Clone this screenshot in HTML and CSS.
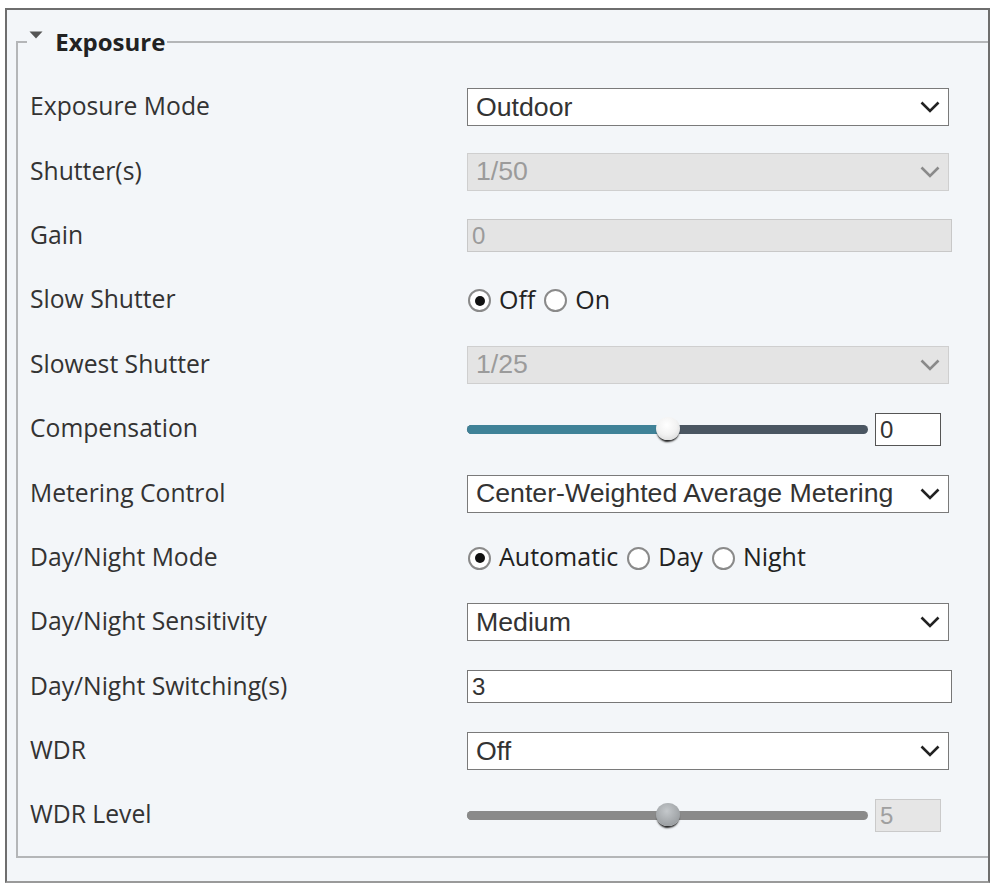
FILE: index.html
```html
<!DOCTYPE html>
<html lang="en">
<head>
    <meta charset="UTF-8">
    <meta name="viewport" content="width=device-width, initial-scale=1.0">
    <title>Exposure</title>
    <link rel="stylesheet" href="styles.css">
</head>
<body>
    <div class="frame">
        <fieldset class="group">
            <legend class="group-title">
                <svg class="caret" width="14" height="8" viewBox="0 0 14 8"><path d="M0.5 0.5 L13.5 0.5 L7 7.5 Z" fill="#555"/></svg>
                Exposure
            </legend>

            <div class="row">
                <div class="label">Exposure Mode</div>
                <div class="select"><span>Outdoor</span><svg class="chev" width="20" height="12" viewBox="0 0 20 12"><path d="M1.5 1.5 L10 10 L18.5 1.5"/></svg></div>
            </div>
            <div class="row">
                <div class="label">Shutter(s)</div>
                <div class="select disabled"><span>1/50</span><svg class="chev" width="20" height="12" viewBox="0 0 20 12"><path d="M1.5 1.5 L10 10 L18.5 1.5"/></svg></div>
            </div>
            <div class="row">
                <div class="label">Gain</div>
                <div class="text-input disabled">0</div>
            </div>
            <div class="row">
                <div class="label">Slow Shutter</div>
                <div class="radios">
                    <span class="radio checked"></span><span class="radio-text">Off</span>
                    <span class="radio"></span><span class="radio-text">On</span>
                </div>
            </div>
            <div class="row">
                <div class="label">Slowest Shutter</div>
                <div class="select disabled"><span>1/25</span><svg class="chev" width="20" height="12" viewBox="0 0 20 12"><path d="M1.5 1.5 L10 10 L18.5 1.5"/></svg></div>
            </div>
            <div class="row">
                <div class="label">Compensation</div>
                <div class="slider-wrap">
                    <div class="slider">
                        <div class="slider-fill" style="width: 50%"></div>
                        <div class="slider-thumb" style="left: 50%"></div>
                    </div>
                    <div class="slider-value">0</div>
                </div>
            </div>
            <div class="row">
                <div class="label">Metering Control</div>
                <div class="select"><span>Center-Weighted Average Metering</span><svg class="chev" width="20" height="12" viewBox="0 0 20 12"><path d="M1.5 1.5 L10 10 L18.5 1.5"/></svg></div>
            </div>
            <div class="row">
                <div class="label">Day/Night Mode</div>
                <div class="radios">
                    <span class="radio checked"></span><span class="radio-text">Automatic</span>
                    <span class="radio"></span><span class="radio-text">Day</span>
                    <span class="radio"></span><span class="radio-text">Night</span>
                </div>
            </div>
            <div class="row">
                <div class="label">Day/Night Sensitivity</div>
                <div class="select"><span>Medium</span><svg class="chev" width="20" height="12" viewBox="0 0 20 12"><path d="M1.5 1.5 L10 10 L18.5 1.5"/></svg></div>
            </div>
            <div class="row">
                <div class="label">Day/Night Switching(s)</div>
                <div class="text-input">3</div>
            </div>
            <div class="row">
                <div class="label">WDR</div>
                <div class="select"><span>Off</span><svg class="chev" width="20" height="12" viewBox="0 0 20 12"><path d="M1.5 1.5 L10 10 L18.5 1.5"/></svg></div>
            </div>
            <div class="row">
                <div class="label">WDR Level</div>
                <div class="slider-wrap disabled">
                    <div class="slider">
                        <div class="slider-fill" style="width: 50%"></div>
                        <div class="slider-thumb" style="left: 50%"></div>
                    </div>
                    <div class="slider-value">5</div>
                </div>
            </div>
        </fieldset>
    </div>
</body>
</html>
```

FILE: styles.css
```css
body {
    margin: 0;
    background: #ffffff;
    font-family: "Open Sans", "Noto Sans", sans-serif;
    color: #333;
}
.frame {
    margin: 8px 0 0 5px;
    height: 871px;
    border: 2px solid #6e6e6e;
    border-bottom-color: #9a9a9a;
    background: #f3f6f9;
}
.group {
    margin: 16px 0 0 9px;
    padding: 17px 0 8px 12px;
    border: 2px solid #b4b6b8;
    border-right: none;
}
.group-title {
    margin-left: -3px;
    padding: 0 2px;
    height: 32px;
    line-height: 32px;
    font-size: 24px;
    font-weight: bold;
    color: #222;
}
.caret {
    vertical-align: 12px;
    margin-right: 6px;
}
.row {
    display: grid;
    grid-template-columns: 437px 1fr;
    align-items: center;
    height: 64.4px;
}
.label {
    padding-bottom: 3px;
    font-size: 24.7px;
    color: #333;
}
.select {
    display: flex;
    align-items: center;
    justify-content: space-between;
    box-sizing: border-box;
    width: 482px;
    height: 38px;
    padding: 0 8px 0 8px;
    background: #fff;
    border: 1px solid #7a7a7a;
    font-family: "Liberation Sans", Arial, sans-serif;
    font-size: 26.7px;
    color: #333;
}
.chev path {
    fill: none;
    stroke: #222;
    stroke-width: 2.6;
}
.select.disabled {
    background: #e4e4e4;
    border-color: #cfcfcf;
    color: #9b9b9b;
}
.select.disabled .chev path {
    stroke: #8a8a8a;
}
.text-input {
    box-sizing: border-box;
    width: 485px;
    height: 33px;
    padding: 0 4px;
    line-height: 31px;
    background: #fff;
    border: 1px solid #777;
    font-family: "Liberation Sans", Arial, sans-serif;
    font-size: 24px;
    color: #333;
}
.text-input.disabled {
    background: #e4e4e4;
    border-color: #c8c8c8;
    color: #9b9b9b;
}
.radios {
    display: flex;
    align-items: center;
    font-size: 25px;
    color: #222;
}
.radio {
    box-sizing: border-box;
    width: 23px;
    height: 23px;
    margin: 1px 8px 0 1px;
    border: 2px solid #8a8a8a;
    border-radius: 50%;
    background: #fff;
    position: relative;
}
.radio.checked::after {
    content: "";
    position: absolute;
    left: 4.5px;
    top: 4.5px;
    width: 10px;
    height: 10px;
    border-radius: 50%;
    background: #111;
}
.radio-text {
    margin-right: 8px;
    padding-bottom: 3px;
}
.slider-wrap {
    display: flex;
    align-items: center;
}
.slider {
    position: relative;
    width: 401px;
    height: 9px;
    border-radius: 5px;
    background: #4a5662;
}
.slider-fill {
    height: 100%;
    border-radius: 5px 0 0 5px;
    background: #3f8298;
}
.slider-thumb {
    position: absolute;
    top: -8px;
    width: 24px;
    height: 23px;
    margin-left: -12px;
    border-radius: 50%;
    background: radial-gradient(circle at 45% 35%, #ffffff 0%, #f2f2f2 50%, #cfcfcf 100%);
    box-shadow: 0 3px 2px -1px #222;
}
.slider-value {
    box-sizing: border-box;
    width: 66px;
    height: 33px;
    margin-left: 7px;
    padding: 0 4px;
    line-height: 31px;
    background: #fff;
    border: 1px solid #555;
    font-family: "Liberation Sans", Arial, sans-serif;
    font-size: 24px;
    color: #333;
}
.slider-wrap.disabled .slider,
.slider-wrap.disabled .slider-fill {
    background: #8a8a8a;
}
.slider-wrap.disabled .slider-thumb {
    background: radial-gradient(circle at 45% 35%, #c4c8cb 0%, #a3a7aa 60%, #8e9295 100%);
}
.slider-wrap.disabled .slider-value {
    background: #e6e6e6;
    border-color: #cacaca;
    color: #a0a0a0;
}
```
